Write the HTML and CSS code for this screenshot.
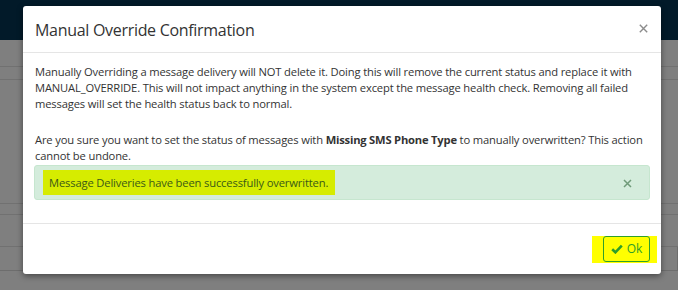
FILE: index.html
```html
<!DOCTYPE html>
<html>
<head>
<meta charset="utf-8">
<link rel="stylesheet" href="styles.css">
</head>
<body>
<div class="page">
  <div class="navbar"></div>
  <div class="rows">
    <div class="row r1"></div>
    <div class="row r2"></div>
    <div class="row r3"></div>
    <div class="row r4"></div>
    <div class="row r5"></div>
    <div class="inputs">
      <div class="inp i1"></div>
      <div class="inp i2"></div>
    </div>
  </div>
</div>

<div class="modal">
  <div class="modal-header">
    <h4 class="modal-title">Manual Override Confirmation</h4>
    <span class="close">
      <svg width="9" height="9" viewBox="0 0 9 9"><path d="M0.8 0.8 L8.2 8.2 M8.2 0.8 L0.8 8.2" stroke="#8c8c8c" stroke-width="1.4" fill="none"/></svg>
    </span>
  </div>
  <div class="modal-body">
    <p class="p1">Manually Overriding a message delivery will NOT delete it. Doing this will remove the current status and replace it with MANUAL_OVERRIDE. This will not impact anything in the system except the message health check. Removing all failed messages will set the health status back to normal.</p>
    <p class="p2">Are you sure you want to set the status of messages with <b>Missing SMS Phone Type</b> to manually overwritten? This action cannot be undone.</p>
    <div class="alert">
      <span class="marker">Message Deliveries have been successfully overwritten.</span>
      <span class="alert-close">
        <svg width="9" height="9" viewBox="0 0 9 9"><path d="M1 1 L8 8 M8 1 L1 8" stroke="#6f9a79" stroke-width="1.5" fill="none"/></svg>
      </span>
    </div>
  </div>
  <div class="modal-footer">
    <span class="btn-marker">
      <span class="btn">
        <svg width="12" height="10" viewBox="0 0 12 10"><path d="M1.2 5.2 L4.4 8.3 L10.8 1.6" stroke="#2f9e2a" stroke-width="2.6" fill="none"/></svg>
        <span>Ok</span>
      </span>
    </span>
  </div>
</div>
</body>
</html>
```

FILE: styles.css
```css
html, body {
  margin: 0;
  padding: 0;
}
body {
  width: 678px;
  height: 290px;
  overflow: hidden;
  background: #7f7f7f;
  font-family: "Open Sans", "Noto Sans", sans-serif;
}
.page {
  width: 678px;
  height: 290px;
}
.navbar {
  height: 40px;
  background: #021a29;
}
.rows {
  display: flex;
  flex-direction: column;
}
.row {
  border-bottom: 1px solid #717171;
}
.r1 { height: 26px; }
.r2 { height: 12px; }
.r3 { height: 123px; }
.r4 { height: 10px; }
.r5 { height: 31px; }
.inputs {
  display: flex;
  height: 23px;
  border-bottom: 1px solid #6d6d6d;
}
.inp {
  height: 23px;
  border-left: 1px solid #6d6d6d;
  border-right: 1px solid #6d6d6d;
}
.i1 { margin-left: 384px; width: 28px; }
.i2 { margin-left: 25px; width: 250px; }

.modal {
  position: absolute;
  left: 23px;
  top: 6px;
  width: 638px;
  height: 268px;
  background: #fff;
  border-radius: 3px;
  box-shadow: 0 2px 6px rgba(0, 0, 0, 0.45);
  display: flex;
  flex-direction: column;
  color: #333;
}
.modal-header {
  height: 47px;
  box-sizing: border-box;
  padding: 2px 13px 0 12px;
  display: flex;
  align-items: center;
  justify-content: space-between;
  border-bottom: 1px solid #e5e5e5;
}
.modal-title {
  margin: 0;
  font-weight: 400;
  font-size: 16px;
  letter-spacing: -0.3px;
  color: #333;
}
.close {
  display: flex;
  margin-top: -3px;
}
.modal-body {
  padding: 11px 11px 23px 12px;
  font-size: 11.2px;
  letter-spacing: -0.15px;
  line-height: 16px;
  color: #333;
}
.modal-body p {
  margin: 0;
}
.p1 {
  margin-bottom: 20px !important;
}
.p2 {
  margin-bottom: 1px !important;
}
.modal-body b {
  font-weight: 700;
  letter-spacing: -0.2px;
}
.alert {
  height: 35px;
  box-sizing: border-box;
  margin-left: -1px;
  background: #d4ecdc;
  border: 1px solid #c6e6cf;
  border-radius: 3px;
  display: flex;
  align-items: center;
  justify-content: space-between;
  padding: 0 17px 0 8px;
}
.marker {
  background: #d6ec00;
  color: #3b5a17;
  padding: 6px 7px 6px 6px;
  line-height: 13px;
}
.alert-close {
  display: flex;
  margin-top: 1px;
}
.modal-footer {
  flex: 1;
  border-top: 1px solid #e5e5e5;
  display: flex;
  align-items: center;
  justify-content: flex-end;
  padding: 0 4px 0 0;
}
.btn-marker {
  background: #ffff00;
  padding: 0 7px 1px 11px;
  display: flex;
}
.btn {
  width: 47px;
  height: 26px;
  box-sizing: border-box;
  border: 1px solid #2fa02a;
  border-radius: 3px;
  display: flex;
  align-items: center;
  justify-content: center;
  gap: 4px;
  color: #2f9e2a;
  font-size: 12px;
}
```
